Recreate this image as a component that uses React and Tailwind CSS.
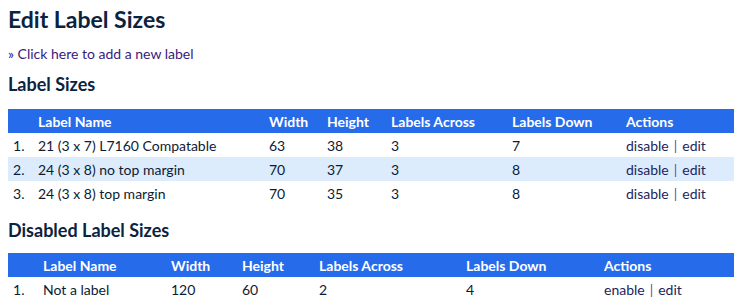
import React from 'react';

const activeSizes = [
    { name: '21 (3 x 7) L7160 Compatable', width: 63, height: 38, across: 3, down: 7 },
    { name: '24 (3 x 8) no top margin', width: 70, height: 37, across: 3, down: 8 },
    { name: '24 (3 x 8) top margin', width: 70, height: 35, across: 3, down: 8 },
];

const disabledSizes = [
    { name: 'Not a label', width: 120, height: 60, across: 2, down: 4 },
];

const font = { fontFamily: '"Trebuchet MS", Lato, "Noto Sans", sans-serif' };

const SizeTable = ({ rows, action, cols }) => (
    <table className="w-[726px] border-collapse table-fixed text-[14px] text-[#0d1b33]">
        <colgroup>
            {cols.map((w, i) => (
                <col key={i} className={w} />
            ))}
        </colgroup>
        <thead>
            <tr className="bg-[#266be9] text-white font-bold h-6">
                <th className="pl-[5px]"></th>
                <th className="pl-[5px] text-left">Label Name</th>
                <th className="pl-[5px] text-left">Width</th>
                <th className="pl-[5px] text-left">Height</th>
                <th className="pl-[5px] text-left">Labels Across</th>
                <th className="pl-[5px] text-left">Labels Down</th>
                <th className="pl-[5px] text-left">Actions</th>
            </tr>
        </thead>
        <tbody>
            {rows.map((r, i) => (
                <tr key={r.name} className={`h-6 ${i % 2 === 1 ? 'bg-[#dcecfd]' : 'bg-white'}`}>
                    <td className="pl-[5px]">{i + 1}.</td>
                    <td className="pl-[5px]">{r.name}</td>
                    <td className="pl-[5px]">{r.width}</td>
                    <td className="pl-[5px]">{r.height}</td>
                    <td className="pl-[5px]">{r.across}</td>
                    <td className="pl-[5px]">{r.down}</td>
                    <td className="pl-[5px]">
                        <a href="#" className="text-[#1b1f5e]">{action}</a>
                        <span className="text-[#7a3ea3] mx-[5px]">|</span>
                        <a href="#" className="text-[#1b1f5e]">edit</a>
                    </td>
                </tr>
            ))}
        </tbody>
    </table>
);

const App = () => {
    return (
        <div className="bg-white min-h-screen px-2 pt-[5px] text-[#0d1b33]" style={font}>
            <h1 className="text-[23px] font-bold text-[#0c2340] leading-[28px]">Edit Label Sizes</h1>
            <p className="mt-[12px] text-[14px] leading-[18px]">
                <a href="#" className="text-[#3b1a7a]">» Click here to add a new label</a>
            </p>
            <h2 className="mt-[10px] text-[18px] font-bold text-[#0c2340] leading-[22px]">Label Sizes</h2>
            <div className="mt-[14px]">
                <SizeTable
                    rows={activeSizes}
                    action="disable"
                    cols={['w-[25px]', 'w-[231px]', 'w-[58px]', 'w-[64px]', 'w-[121px]', 'w-[114px]', 'w-[113px]']}
                />
            </div>
            <h2 className="mt-[14px] text-[18px] font-bold text-[#0c2340] leading-[22px]">Disabled Label Sizes</h2>
            <div className="mt-[12px]">
                <SizeTable
                    rows={disabledSizes}
                    action="enable"
                    cols={['w-[30px]', 'w-[128px]', 'w-[71px]', 'w-[77px]', 'w-[147px]', 'w-[138px]', 'w-[135px]']}
                />
            </div>
        </div>
    );
};

export default App;
